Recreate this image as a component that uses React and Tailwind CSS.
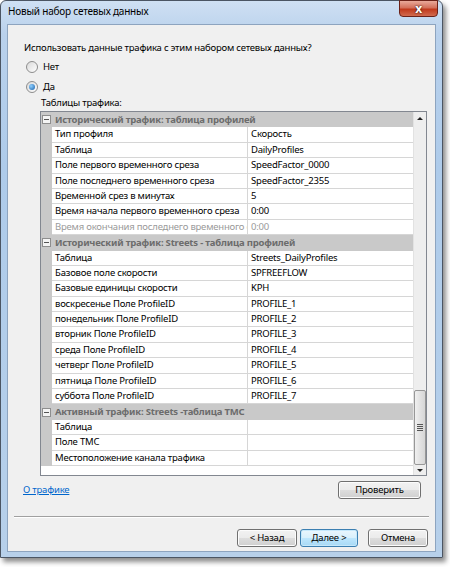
import React from 'react';

const sections = [
  {
    title: 'Исторический трафик: таблица профилей',
    rows: [
      ['Тип профиля', 'Скорость'],
      ['Таблица', 'DailyProfiles'],
      ['Поле первого временного среза', 'SpeedFactor_0000'],
      ['Поле последнего временного среза', 'SpeedFactor_2355'],
      ['Временной срез в минутах', '5'],
      ['Время начала первого временного среза', '0:00'],
      ['Время окончания последнего временного среза', '0:00', true],
    ],
  },
  {
    title: 'Исторический трафик: Streets - таблица профилей',
    rows: [
      ['Таблица', 'Streets_DailyProfiles'],
      ['Базовое поле скорости', 'SPFREEFLOW'],
      ['Базовые единицы скорости', 'KPH'],
      ['воскресенье Поле ProfileID', 'PROFILE_1'],
      ['понедельник Поле ProfileID', 'PROFILE_2'],
      ['вторник Поле ProfileID', 'PROFILE_3'],
      ['среда Поле ProfileID', 'PROFILE_4'],
      ['четверг Поле ProfileID', 'PROFILE_5'],
      ['пятница Поле ProfileID', 'PROFILE_6'],
      ['суббота Поле ProfileID', 'PROFILE_7'],
    ],
  },
  {
    title: 'Активный трафик: Streets -таблица TMC',
    rows: [
      ['Таблица', ''],
      ['Поле TMC', ''],
      ['Местоположение канала трафика', ''],
    ],
  },
];

function Radio({ checked, label }) {
  return (
    <div className="flex items-center gap-[5px] h-[20px]">
      <div className="w-[12px] h-[12px] rounded-full border border-[#8d8d8d] bg-[linear-gradient(135deg,#d9d9d9,#ffffff)] flex items-center justify-center">
        {checked && (
          <div className="w-[6px] h-[6px] rounded-full bg-[radial-gradient(circle_at_35%_35%,#8fd0ff,#1a5fa8)]" />
        )}
      </div>
      <span>{label}</span>
    </div>
  );
}

function Button({ children, primary, className = '' }) {
  return (
    <button
      className={
        'h-[18px] rounded-[3px] border text-[9.5px] leading-none text-black ' +
        (primary
          ? 'border-[#3c7fb1] bg-[linear-gradient(#eaf6fd,#d9f0fc_50%,#bee6fd_51%,#a7d9f5)] shadow-[inset_0_0_0_1px_#c6e8fb] '
          : 'border-[#707070] bg-[linear-gradient(#f2f2f2,#ebebeb_50%,#dddddd_51%,#cfcfcf)] shadow-[inset_0_0_0_1px_#fcfcfc] ') +
        className
      }
    >
      {children}
    </button>
  );
}

function CategoryRow({ title }) {
  return (
    <div className="flex items-center h-[15.4px] bg-[#c9c9c9]">
      <div className="w-[11px] flex justify-center">
        <div className="w-[9px] h-[9px] border border-[#8e8e8e] bg-[#f4f4f4] flex items-center justify-center">
          <div className="w-[5px] h-[1px] bg-[#555]" />
        </div>
      </div>
      <span className="pl-[3px] font-bold text-[#6c6c6c] whitespace-nowrap">{title}</span>
    </div>
  );
}

function PropRow({ label, value, disabled }) {
  return (
    <div className="flex h-[15.4px] bg-[#c9c9c9]">
      <div className="w-[11px]" />
      <div
        className={
          'w-[195px] pl-[3px] bg-white border-b border-[#d6d6d6] overflow-hidden whitespace-nowrap leading-[14px] ' +
          (disabled ? 'text-[#9a9a9a]' : 'text-black')
        }
      >
        {label}
      </div>
      <div
        className={
          'flex-1 pl-[3px] bg-white border-b border-l border-[#d6d6d6] overflow-hidden whitespace-nowrap leading-[14px] ' +
          (disabled ? 'text-[#9a9a9a]' : 'text-black')
        }
      >
        {value}
      </div>
    </div>
  );
}

function Scrollbar() {
  return (
    <div className="w-[13px] bg-[#eeeeee] border-l border-[#e2e2e2] flex flex-col items-center">
      <div className="h-[13px] flex items-center justify-center">
        <div className="w-0 h-0 border-l-[3px] border-r-[3px] border-b-[3px] border-l-transparent border-r-transparent border-b-[#222]" />
      </div>
      <div className="flex-1" />
      <div className="w-[12px] h-[75px] rounded-[2px] border border-[#979797] bg-[linear-gradient(90deg,#f0f0f0,#e2e2e2_50%,#d6d6d6)] flex flex-col items-center justify-center gap-[1px]">
        <div className="w-[6px] h-[1px] bg-[#555]" />
        <div className="w-[6px] h-[1px] bg-[#555]" />
        <div className="w-[6px] h-[1px] bg-[#555]" />
        <div className="w-[6px] h-[1px] bg-[#555]" />
      </div>
      <div className="h-[10px] flex items-center justify-center">
        <div className="w-0 h-0 border-l-[3px] border-r-[3px] border-t-[3px] border-l-transparent border-r-transparent border-t-[#222]" />
      </div>
    </div>
  );
}

export default function App() {
  return (
    <div
      className="w-[450px] h-[567px] bg-white text-[9.5px] tracking-[-0.2px] text-black"
      style={{ fontFamily: '"Noto Sans", sans-serif' }}
    >
      {/* Window frame */}
      <div className="w-[443px] h-[558px] rounded-t-[6px] border border-[#4b5563] bg-[linear-gradient(180deg,#cfe0f3,#b9d1ec_6%,#aecbea_30%,#b7d0ea)] shadow-[3px_4px_5px_rgba(0,0,0,0.45)] flex flex-col">
        {/* Title bar */}
        <div className="h-[23px] flex items-start relative">
          <span className="pl-[7px] pt-[5px] text-[10px] leading-none">Новый набор сетевых данных</span>
          <div className="absolute right-[4px] top-[-1px] w-[39px] h-[17px] rounded-b-[4px] border border-[#6b2118] bg-[linear-gradient(#e9a99a,#d3705b_45%,#c1391c_55%,#d16b4f)] flex items-center justify-center">
            <span className="text-white font-bold text-[12px] leading-none [text-shadow:0_0_2px_#000]">x</span>
          </div>
        </div>

        {/* Client area */}
        <div className="flex-1 mx-[6px] mb-[5px] border border-[#8da4bf] bg-[#f0f0f0] flex flex-col">
          <div className="pl-[16px] pt-[16px] leading-[14px]">
            Использовать данные трафика с этим набором сетевых данных?
          </div>
          <div className="pl-[18px] pt-[2px] flex flex-col">
            <Radio label="Нет" />
            <Radio checked label="Да" />
          </div>
          <div className="pl-[33px] leading-[14px] -mt-[1px]">Таблицы трафика:</div>

          {/* Property grid */}
          <div className="ml-[32px] mr-[8px] mt-[1px] h-[365px] border border-[#828790] bg-white flex">
            <div className="flex-1 flex flex-col">
              {sections.map((s) => (
                <React.Fragment key={s.title}>
                  <CategoryRow title={s.title} />
                  {s.rows.map(([l, v, d], i) => (
                    <PropRow key={i} label={l} value={v} disabled={d} />
                  ))}
                </React.Fragment>
              ))}
            </div>
            <Scrollbar />
          </div>

          <div className="flex items-start justify-between pl-[15px] pr-[14px] pt-[5px]">
            <a href="#" className="text-[#0066cc] underline leading-[14px] pt-[2px]">
              О трафике
            </a>
            <Button className="w-[83px]">Проверить</Button>
          </div>

          <div className="mx-[6px] mt-[17px] border-t border-[#a0a0a0] border-b border-b-white" />

          <div className="flex justify-end gap-[3px] pr-[7px] pt-[11px]">
            <Button className="w-[60px]">&lt; Назад</Button>
            <Button primary className="w-[58px]">Далее &gt;</Button>
            <Button className="w-[60px] ml-[7px]">Отмена</Button>
          </div>
        </div>
      </div>
    </div>
  );
}
